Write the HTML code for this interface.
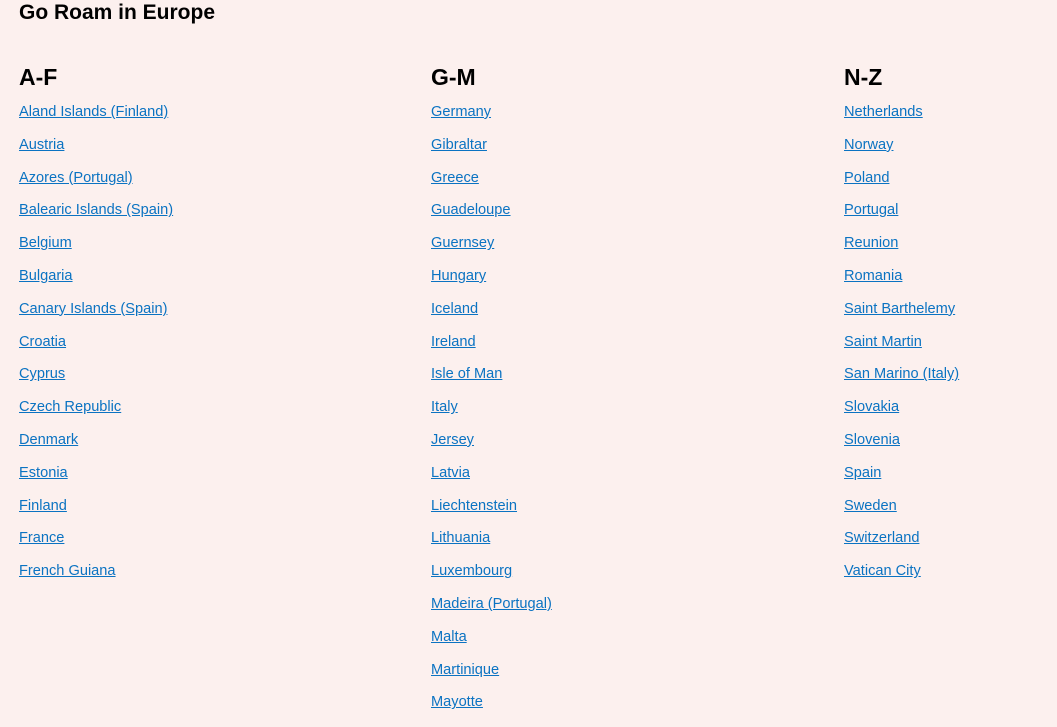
<!DOCTYPE html>
<html><head><style>
html,body{margin:0;padding:0;background:#fcf0ee;width:1057px;height:718px;overflow:hidden;font-family:"Liberation Sans",Arial,sans-serif;}
h1{position:absolute;left:19px;top:3px;margin:0;font-size:21px;line-height:20px;font-weight:bold;color:#000;}
.col{position:absolute;top:63px;width:400px;}
h2{margin:0;font-size:23px;font-weight:bold;color:#000;height:41px;line-height:28px;}
a{display:block;color:#0b73c2;text-decoration:underline;font-size:14.6px;height:32.8px;line-height:17px;}
</style></head><body>
<h1>Go Roam in Europe</h1>
<div class="col" style="left:19px"><h2>A-F</h2>
<a>Aland Islands (Finland)</a><a>Austria</a><a>Azores (Portugal)</a><a>Balearic Islands (Spain)</a><a>Belgium</a><a>Bulgaria</a><a>Canary Islands (Spain)</a><a>Croatia</a><a>Cyprus</a><a>Czech Republic</a><a>Denmark</a><a>Estonia</a><a>Finland</a><a>France</a><a>French Guiana</a></div>
<div class="col" style="left:431px"><h2>G-M</h2>
<a>Germany</a><a>Gibraltar</a><a>Greece</a><a>Guadeloupe</a><a>Guernsey</a><a>Hungary</a><a>Iceland</a><a>Ireland</a><a>Isle of Man</a><a>Italy</a><a>Jersey</a><a>Latvia</a><a>Liechtenstein</a><a>Lithuania</a><a>Luxembourg</a><a>Madeira (Portugal)</a><a>Malta</a><a>Martinique</a><a>Mayotte</a></div>
<div class="col" style="left:844px"><h2>N-Z</h2>
<a>Netherlands</a><a>Norway</a><a>Poland</a><a>Portugal</a><a>Reunion</a><a>Romania</a><a>Saint Barthelemy</a><a>Saint Martin</a><a>San Marino (Italy)</a><a>Slovakia</a><a>Slovenia</a><a>Spain</a><a>Sweden</a><a>Switzerland</a><a>Vatican City</a></div>
</body></html>
